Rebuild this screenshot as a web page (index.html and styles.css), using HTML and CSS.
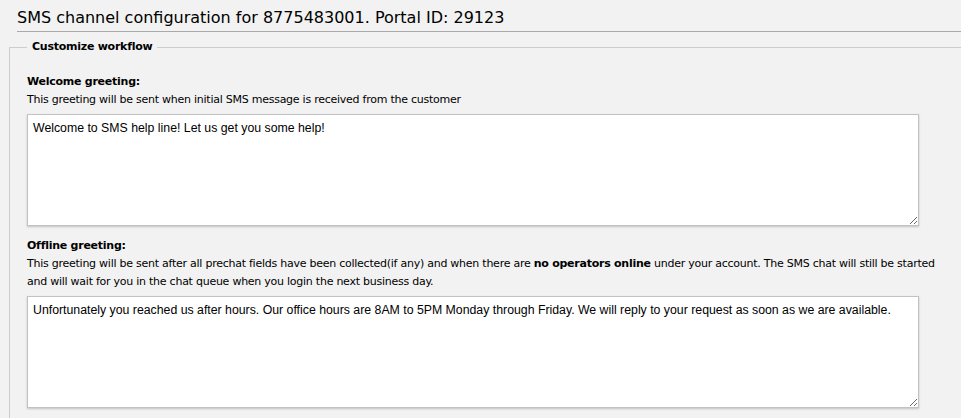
FILE: index.html
```html
<!DOCTYPE html>
<html lang="en">
<head>
    <meta charset="UTF-8">
    <title>SMS channel configuration</title>
    <meta name="viewport" content="width=device-width, initial-scale=1.0">
    <link rel="stylesheet" href="styles.css">
</head>
<body>
    <h1 class="page-title">SMS channel configuration for 8775483001. Portal ID: 29123</h1>

    <fieldset class="workflow">
        <legend>Customize workflow</legend>

        <div class="greeting">
            <label class="greeting-label" for="welcome">Welcome greeting:</label>
            <p class="greeting-help">This greeting will be sent when initial SMS message is received from the customer</p>
            <textarea id="welcome">Welcome to SMS help line! Let us get you some help!</textarea>
        </div>

        <div class="greeting">
            <label class="greeting-label" for="offline">Offline greeting:</label>
            <p class="greeting-help">This greeting will be sent after all prechat fields have been collected(if any) and when there are <b>no operators online</b> under your account. The SMS chat will still be started and will wait for you in the chat queue when you login the next business day.</p>
            <textarea id="offline">Unfortunately you reached us after hours. Our office hours are 8AM to 5PM Monday through Friday. We will reply to your request as soon as we are available.</textarea>
        </div>
    </fieldset>
</body>
</html>
```

FILE: styles.css
```css
html, body {
    overflow: hidden;
}

body {
    background: #f2f2f2;
    color: #000;
    font-family: "DejaVu Sans", Verdana, sans-serif;
    margin: 0;
}

.page-title {
    font-size: 16px;
    font-weight: normal;
    line-height: 20px;
    margin: 8px 0 0 17px;
    padding-bottom: 3px;
    border-bottom: 1px solid #a9a9a9;
}

.workflow {
    margin: 6px -20px 0 9px;
    padding: 17px 37px 20px 17px;
    border: 1px solid #cdcdcd;
    font-size: 11px;
    line-height: 18px;
    letter-spacing: -0.25px;
}

.workflow legend {
    font-weight: bold;
    padding: 0 5px;
}

.greeting-label {
    display: block;
    font-weight: bold;
}

.greeting-help {
    margin: 0 0 5px;
}

.greeting textarea {
    display: block;
    box-sizing: border-box;
    width: 892px;
    height: 112px;
    margin: 0 0 11px;
    padding: 6px 5px;
    background: #fff;
    border: 1px solid #c2c2c2;
    box-shadow: 0 1px 2px rgba(0, 0, 0, 0.2);
    font-family: "Liberation Sans", Arial, sans-serif;
    font-size: 12.3px;
    letter-spacing: 0;
    color: #000;
}
```
